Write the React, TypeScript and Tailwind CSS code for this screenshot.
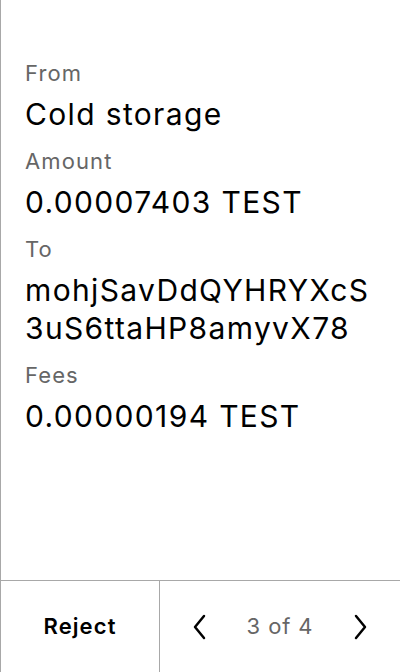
import React from "react";

const Field = ({ label, value, first }: { label: string; value: string; first?: boolean }) => (
  <div className={first ? "" : "mt-[14px]"}>
    <div className="text-[22px] leading-[28px] tracking-[0.05em] text-[#666666]">{label}</div>
    <div className="mt-[8px] text-[30px] leading-[38px] tracking-[0.045em] text-black break-all">{value}</div>
  </div>
);

export default function App() {
  return (
    <div
      className="w-[400px] h-[672px] bg-white border-l border-[#a8a8a8] flex flex-col"
      style={{ fontFamily: "Inter, 'Noto Sans', sans-serif" }}
    >
      <div className="flex-1 pt-[59px] pl-[24px] pr-[20px]">
        <Field first label="From" value="Cold storage" />
        <Field label="Amount" value="0.00007403 TEST" />
        <Field label="To" value="mohjSavDdQYHRYXcS3uS6ttaHP8amyvX78" />
        <Field label="Fees" value="0.00000194 TEST" />
      </div>
      <div className="h-[92px] border-t border-[#a8a8a8] flex">
        <div className="w-[159px] border-r border-[#a8a8a8] flex items-center justify-center text-[22px] tracking-[0.05em] font-semibold text-black">
          Reject
        </div>
        <div className="flex-1 flex items-center justify-between pl-[30px] pr-[30px]">
          <svg width="20" height="28" viewBox="0 0 20 28" fill="none" stroke="black" strokeWidth="2.5" strokeLinecap="round" strokeLinejoin="round">
            <path d="M14 3 L5 14 L14 25" />
          </svg>
          <span className="text-[22px] tracking-[0.04em] text-[#666666]">3 of 4</span>
          <svg width="20" height="28" viewBox="0 0 20 28" fill="none" stroke="black" strokeWidth="2.5" strokeLinecap="round" strokeLinejoin="round">
            <path d="M6 3 L15 14 L6 25" />
          </svg>
        </div>
      </div>
    </div>
  );
}
